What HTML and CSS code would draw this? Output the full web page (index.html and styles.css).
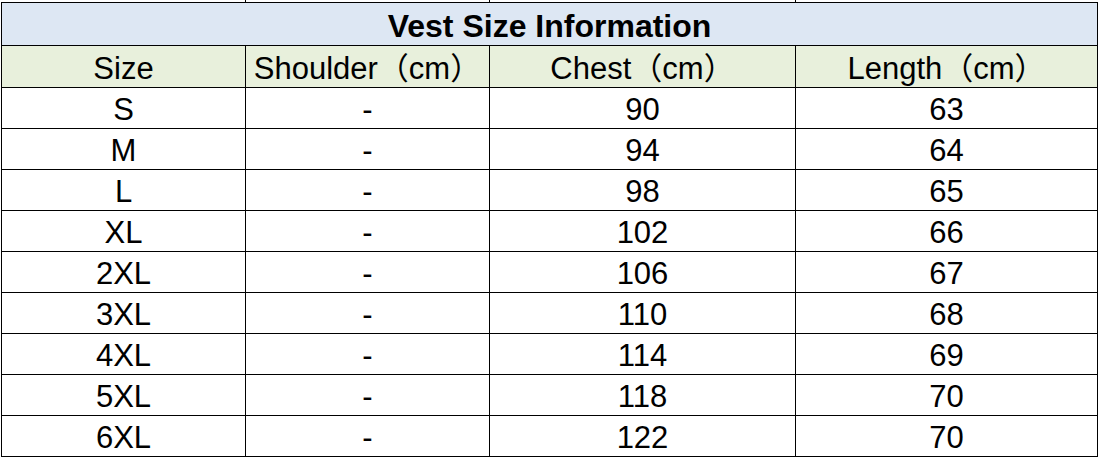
FILE: index.html
```html
<!DOCTYPE html>
<html>
<head>
<meta charset="utf-8">
<link rel="stylesheet" href="styles.css">
</head>
<body>
<table class="sheet">
  <colgroup>
    <col class="c1"><col class="c2"><col class="c3"><col class="c4">
  </colgroup>
  <tr class="stub"><td></td><td></td><td></td><td></td></tr>
  <tr class="title"><td colspan="4">Vest Size Information</td></tr>
  <tr class="head"><td>Size</td><td>Shoulder（cm）</td><td>Chest（cm）</td><td>Length（cm）</td></tr>
  <tr><td>S</td><td>-</td><td>90</td><td>63</td></tr>
  <tr><td>M</td><td>-</td><td>94</td><td>64</td></tr>
  <tr><td>L</td><td>-</td><td>98</td><td>65</td></tr>
  <tr><td>XL</td><td>-</td><td>102</td><td>66</td></tr>
  <tr><td>2XL</td><td>-</td><td>106</td><td>67</td></tr>
  <tr><td>3XL</td><td>-</td><td>110</td><td>68</td></tr>
  <tr><td>4XL</td><td>-</td><td>114</td><td>69</td></tr>
  <tr><td>5XL</td><td>-</td><td>118</td><td>70</td></tr>
  <tr><td>6XL</td><td>-</td><td>122</td><td>70</td></tr>
</table>
</body>
</html>
```

FILE: styles.css
```css
html, body {
  margin: 0;
  padding: 0;
  background: #ffffff;
}
.sheet {
  margin-left: 1px;
  width: 1097px;
  border-collapse: collapse;
  table-layout: fixed;
  font-family: "Liberation Sans", Arial, "Noto Sans CJK SC", sans-serif;
  color: #000;
}
.c1 { width: 244px; }
.c2 { width: 244px; }
.c3 { width: 306px; }
.c4 { width: 302px; }
.sheet td {
  border: 1px solid #000;
  padding: 4px 0 0 0;
  height: 36px;
  text-align: center;
  vertical-align: middle;
  font-size: 31px;
  line-height: 34px;
  white-space: nowrap;
}
.sheet .stub td {
  height: 2px;
  padding: 0;
  line-height: 0;
  font-size: 0;
  border-top: none;
  border-left: none;
}
.sheet .stub td:last-child {
  border-right: none;
}
.sheet .title td {
  height: 39px;
  padding-top: 3px;
  background: #dde7f3;
  font-weight: bold;
  font-size: 32px;
}
.sheet .head td {
  height: 37px;
  background: #e8f0dc;
}
```
